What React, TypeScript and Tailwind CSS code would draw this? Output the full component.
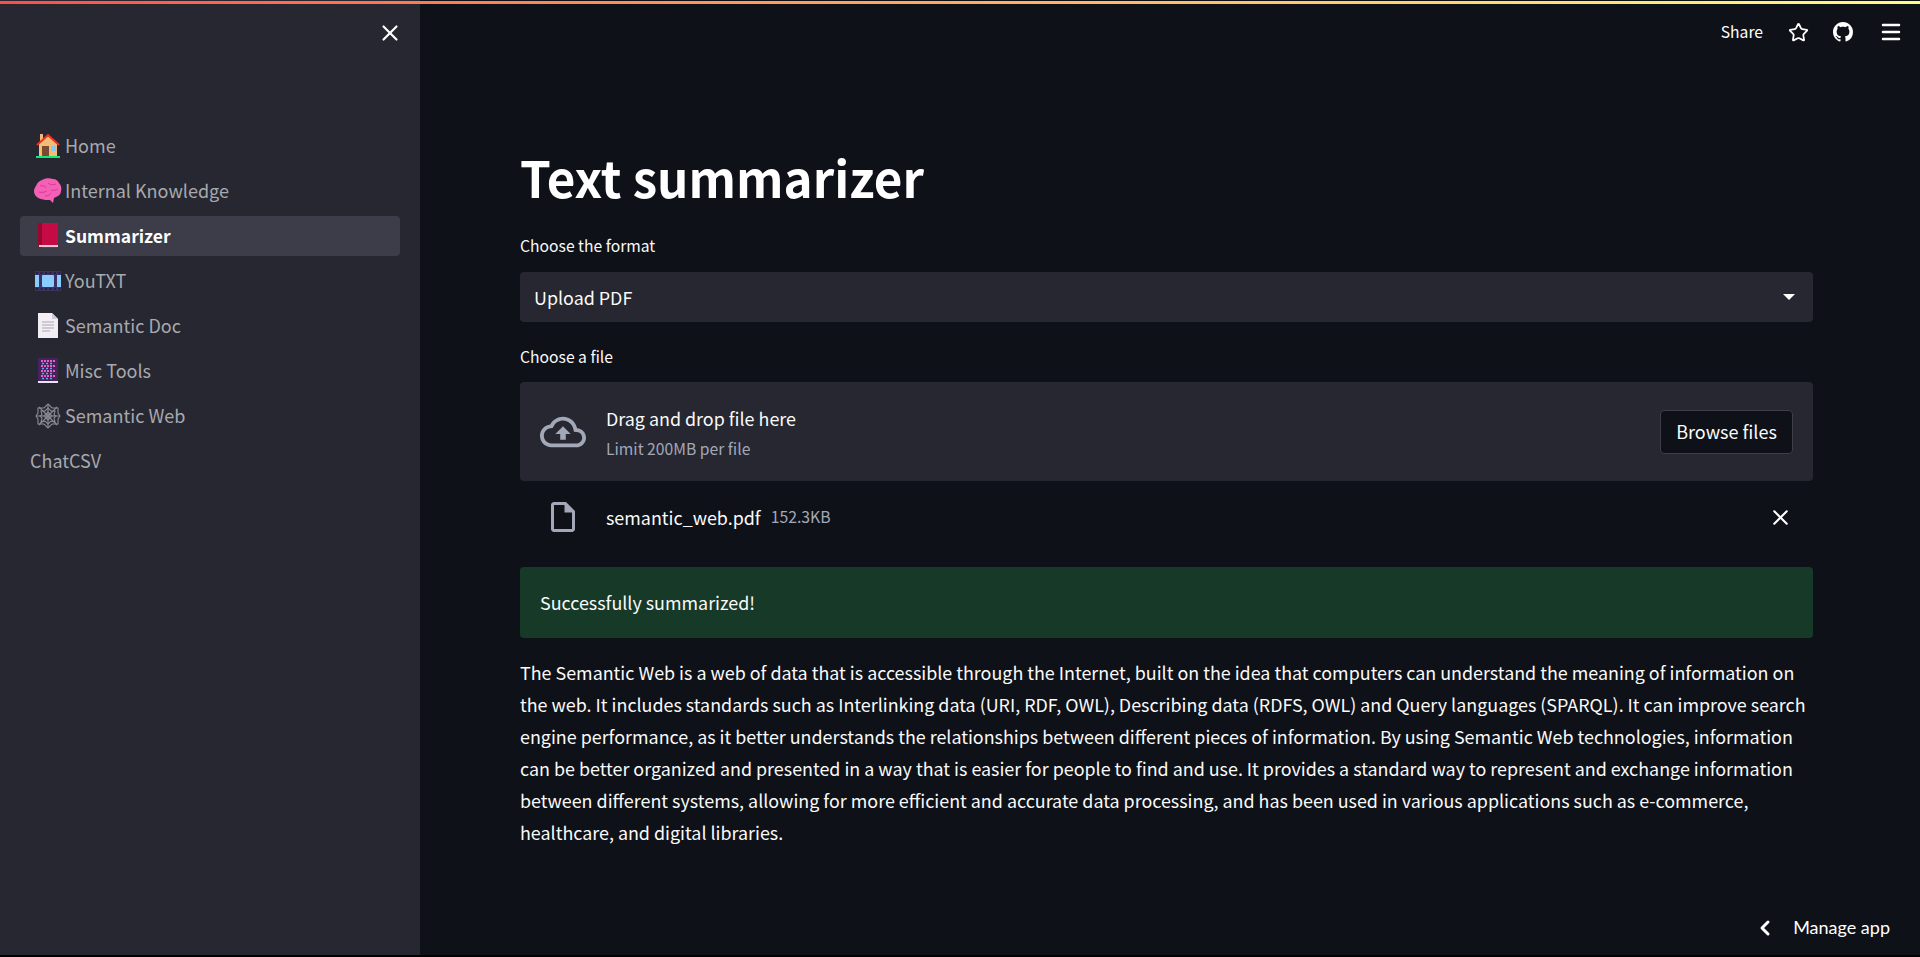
import { ChevronLeft, Menu, Star, X } from "lucide-react";

const sourceSans = { fontFamily: '"Noto Sans CJK SC", "Noto Sans", sans-serif' };

function HomeEmoji() {
  return (
    <svg width="26" height="26" viewBox="0 0 26 26">
      <rect x="5" y="1" width="3" height="7" fill="#f4b77a" />
      <path d="M4 11 13 3l9 8v13H4z" fill="#f3bd78" />
      <path d="M2 12 13 2l11 10" fill="none" stroke="#f4301f" strokeWidth="2" />
      <rect x="7" y="13" width="7" height="10" fill="#7b4a32" />
      <rect x="16" y="13" width="5" height="5" fill="#85c9f7" />
      <rect x="1" y="23" width="24" height="2" fill="#10e878" />
    </svg>
  );
}

function BrainEmoji() {
  return (
    <svg width="28" height="26" viewBox="0 0 28 26">
      <path d="M8 2c3-2 8-2 11-1 3 0 5 2 6 4 2 2 3 5 2 8 0 3-2 5-5 6l-2 1-1 5-3-3c-3 0-6 0-9-1-4-1-7-4-7-8 0-2 1-4 2-5 1-3 3-5 6-6z" fill="#f55fb5" />
      <path d="M6 8c3-1 5 0 6 2M14 5c2 2 5 2 8 1M17 12c2 1 5 0 7-1M5 14c3 1 6 0 8-1M11 18c3 0 5-1 6-3" fill="none" stroke="#d0408f" strokeWidth="1" />
    </svg>
  );
}

function BookEmoji() {
  return (
    <svg width="26" height="26" viewBox="0 0 26 26">
      <rect x="3" y="0" width="20" height="25" rx="1" fill="#c50a45" />
      <rect x="3" y="0" width="4" height="25" fill="#96082f" />
      <rect x="4" y="22" width="19" height="2" fill="#f0c4cf" />
    </svg>
  );
}

function FilmEmoji() {
  return (
    <svg width="26" height="22" viewBox="0 0 26 22">
      <rect width="26" height="20" y="1" fill="#3a3360" />
      <path d="M1 3h24M1 19h24" stroke="#1f1b3a" strokeWidth="1.500" strokeDasharray="2 2.500" />
      <rect x="0" y="5" width="4" height="12" fill="#8accff" />
      <rect x="7" y="5" width="12" height="12" rx="1" fill="#8accff" />
      <rect x="22" y="5" width="4" height="12" fill="#8accff" />
    </svg>
  );
}

function PageEmoji() {
  return (
    <svg width="26" height="26" viewBox="0 0 26 26">
      <path d="M3 0h14l6 6v19H3z" fill="#f2eef4" />
      <path d="M17 0v6h6z" fill="#cfc9d4" />
      <path d="M7 9h12M7 12h12M7 15h12M7 18h8" stroke="#aaa4b0" strokeWidth="1.200" />
    </svg>
  );
}

function AbacusEmoji() {
  return (
    <svg width="26" height="26" viewBox="0 0 26 26">
      <rect x="3" y="0" width="20" height="25" fill="#45235f" />
      <path d="M6 3h14M6 8h14M6 13h14M6 18h14" stroke="#ef5fb8" strokeWidth="2" strokeDasharray="2 1" />
      <path d="M7 5.500h12M7 10.500h12M7 15.500h12M7 20.500h12" stroke="#5ba6f5" strokeWidth="1.500" strokeDasharray="2 2" />
      <rect x="3" y="23" width="20" height="2" fill="#e9e2ef" />
    </svg>
  );
}

function WebEmoji() {
  return (
    <svg width="26" height="26" viewBox="0 0 26 26" fill="none" stroke="#8d8a94" strokeWidth="1.100">
      <path d="M13 1 17 5 23 5 23 10 25 13 23 16 23 21 17 21 13 25 9 21 3 21 3 16 1 13 3 10 3 5 9 5z" />
      <path d="M13 5 16 8 20 8 19 12 21 13 19 15 20 19 16 18 13 21 10 18 6 19 7 15 5 13 7 12 6 8 10 8z" />
      <path d="M13 9 15 11 17 13 15 15 13 17 11 15 9 13 11 11z" />
      <path d="M13 1V25M1 13H25M4 4 22 22M22 4 4 22" />
    </svg>
  );
}

const navItems = [
  { label: "Home", icon: <HomeEmoji /> },
  { label: "Internal Knowledge", icon: <BrainEmoji /> },
  { label: "Summarizer", icon: <BookEmoji />, active: true },
  { label: "YouTXT", icon: <FilmEmoji /> },
  { label: "Semantic Doc", icon: <PageEmoji /> },
  { label: "Misc Tools", icon: <AbacusEmoji /> },
  { label: "Semantic Web", icon: <WebEmoji /> },
  { label: "ChatCSV" },
];

function Sidebar() {
  return (
    <aside className="w-[420px] shrink-0 bg-[#262730] relative pt-[126px] px-5">
      <button className="absolute right-[17px] top-[20px] text-white">
        <X size={26} strokeWidth={2} />
      </button>
      <nav className="flex flex-col gap-[5px]">
        {navItems.map((item) => (
          <div
            key={item.label}
            className={
              item.active
                ? "h-10 flex items-center rounded-[4px] bg-[#3c3d48] pl-[10px] text-white font-semibold text-[17.5px]"
                : "h-10 flex items-center pl-[10px] text-[#a8a9ae] text-[18px]"
            }
          >
            {item.icon && <span className="w-[35px] h-7 flex items-center justify-center shrink-0">{item.icon}</span>}
            <span className={item.active ? "" : "pb-[2px]"}>{item.label}</span>
          </div>
        ))}
      </nav>
    </aside>
  );
}

function Toolbar() {
  return (
    <header className="h-[64px] flex items-center justify-end pr-[7px] text-white">
      <span className="text-[15.7px] mr-[13px]">Share</span>
      <span className="w-[44px] flex justify-center mr-px">
        <Star size={21} strokeWidth={2} />
      </span>
      <span className="w-[44px] flex justify-center mr-[4px]">
        <svg width="20" height="20" viewBox="0 0 16 16" fill="currentColor">
          <path d="M8 0C3.58 0 0 3.58 0 8c0 3.54 2.29 6.53 5.47 7.59.4.07.55-.17.55-.38 0-.19-.01-.82-.01-1.49-2.01.37-2.53-.49-2.69-.94-.09-.23-.48-.94-.82-1.13-.28-.15-.68-.52-.01-.53.63-.01 1.08.58 1.23.82.72 1.21 1.87.87 2.33.66.07-.52.28-.87.51-1.07-1.78-.2-3.64-.89-3.64-3.95 0-.87.31-1.59.82-2.15-.08-.2-.36-1.02.08-2.12 0 0 .67-.21 2.2.82.64-.18 1.32-.27 2-.27s1.36.09 2 .27c1.53-1.04 2.2-.82 2.2-.82.44 1.1.16 1.92.08 2.12.51.56.82 1.27.82 2.15 0 3.07-1.87 3.75-3.65 3.95.29.25.54.73.54 1.48 0 1.07-.01 1.93-.01 2.2 0 .21.15.46.55.38A8.01 8.01 0 0 0 16 8c0-4.42-3.58-8-8-8z" />
        </svg>
      </span>
      <span className="w-[44px] flex justify-center">
        <Menu size={24} strokeWidth={2.500} />
      </span>
    </header>
  );
}

function UploadCloud() {
  return (
    <svg width="46" height="46" viewBox="0 0 24 24" fill="#a3a8b8">
      <path d="M19.35 10.04C18.67 6.59 15.64 4 12 4 9.11 4 6.600 5.640 5.350 8.040 2.340 8.360 0 10.910 0 14c0 3.310 2.690 6 6 6h13c2.760 0 5-2.240 5-5 0-2.640-2.050-4.780-4.650-4.960zM19 18H6c-2.210 0-4-1.790-4-4 0-2.050 1.530-3.760 3.560-3.970l1.070-.11.500-.95C8.080 7.140 9.940 6 12 6c2.620 0 4.880 1.860 5.390 4.430l.3 1.500 1.530.11c1.560.1 2.780 1.410 2.780 2.960 0 1.650-1.350 3-3 3z" />
      <path d="M8 13h2.550v3h2.900v-3H16l-4-4z" />
    </svg>
  );
}

function FileIcon() {
  return (
    <svg width="36" height="36" viewBox="0 0 24 24" fill="#a3a8b8">
      <path d="M14 2H6c-1.100 0-2 .9-2 2v16c0 1.100.89 2 1.990 2H18c1.100 0 2-.9 2-2V8l-6-6zM6 20V4h7v5h5v11H6z" />
    </svg>
  );
}

export default function App() {
  return (
    <div className="h-[957px] bg-black overflow-hidden">
      <div className="relative h-[955px] flex bg-[#0e1117] text-[#fafafa] overflow-hidden" style={sourceSans}>
        <div className="absolute top-[1px] left-0 right-0 h-[3px] bg-gradient-to-r from-[#ff4b4b] to-[#fffd80] z-10" />
        <Sidebar />
        <div className="flex-1 min-w-0 flex flex-col relative">
          <Toolbar />
          <main className="pl-[100px] pr-[107px] pt-[78px]">
            <h1 className="text-[49.3px] leading-[70px] font-bold text-white mb-[22px]">Text summarizer</h1>
            <label className="block text-[15.7px] leading-[24px] mb-[14px]">Choose the format</label>
            <div className="h-[50px] rounded-[4px] bg-[#262730] flex items-center justify-between pl-[14px] pr-[18px] text-[17.9px]">
              <span>Upload PDF</span>
              <span className="w-0 h-0 border-x-[6px] border-x-transparent border-t-[6px] border-t-white" />
            </div>
            <label className="block text-[15.7px] leading-[24px] mt-[23px] mb-[13px]">Choose a file</label>
            <div className="h-[99px] rounded-[4px] bg-[#262730] flex items-center pl-[20px] pr-[20px]">
              <UploadCloud />
              <div className="ml-[20px] flex-1">
                <div className="text-[17.9px] leading-[28px]">Drag and drop file here</div>
                <div className="text-[15.7px] leading-[22px] mt-[6px] text-[#a3a8b8]">Limit 200MB per file</div>
              </div>
              <button className="h-[44px] w-[133px] rounded-[4px] border border-[#3d3f48] bg-[#0e1117] text-[18px]">Browse files</button>
            </div>
            <div className="h-[72px] flex items-center pl-[25px] pr-[20px]">
              <FileIcon />
              <span className="ml-[25px] text-[17.9px]">semantic_web.pdf</span>
              <span className="ml-[10px] text-[15.8px] text-[#a3a8b8]">152.3KB</span>
              <X size={25} strokeWidth={2} className="ml-auto text-white" />
            </div>
            <div className="mt-[14px] h-[71px] rounded-[4px] bg-[#173928] flex items-center px-[20px] text-[17.9px]">Successfully summarized!</div>
            <p className="mt-[18px] text-[17.9px] leading-[32px]">
              The Semantic Web is a web of data that is accessible through the Internet, built on the idea that computers can understand the meaning of information on the web. It includes standards such as Interlinking data (URI, RDF, OWL), Describing data (RDFS, OWL) and Query languages (SPARQL). It can improve search engine performance, as it better understands the relationships between different pieces of information. By using Semantic Web technologies, information can be better organized and presented in a way that is easier for people to find and use. It provides a standard way to represent and exchange information between different systems, allowing for more efficient and accurate data processing, and has been used in various applications such as e-commerce, healthcare, and digital libraries.
            </p>
          </main>
          <div className="absolute right-[30px] bottom-[14px] flex items-center text-white" style={{ fontFamily: '"Lato", sans-serif' }}>
            <ChevronLeft size={24} strokeWidth={3} className="mr-[16px]" />
            <span className="text-[18px]">Manage app</span>
          </div>
        </div>
      </div>
    </div>
  );
}
